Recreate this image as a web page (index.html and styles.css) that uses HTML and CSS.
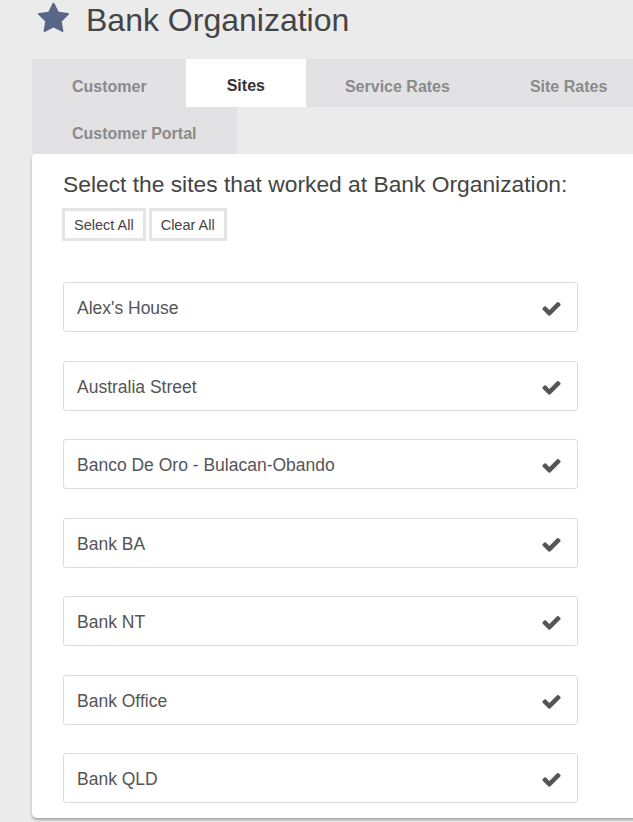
FILE: index.html
```html
<!DOCTYPE html>
<html>
<head>
<meta charset="utf-8">
<link rel="stylesheet" href="styles.css">
</head>
<body>
<div class="page">
  <header class="header">
    <svg class="star" viewBox="0 0 1664 1600" aria-hidden="true"><path d="M1664 583q0 22-26 48l-363 354 86 500q1 7 1 20 0 21-10.5 35.5t-30.5 14.5q-19 0-40-12l-449-236-449 236q-22 12-40 12-21 0-31.5-14.5t-10.5-35.5q0-6 2-20l86-500-364-354q-25-27-25-48 0-37 56-46l502-73 225-455q19-41 49-41t49 41l225 455 502 73q56 9 56 46z"/></svg>
    <h1 class="title">Bank Organization</h1>
  </header>
  <nav class="tabs">
    <a class="tab">Customer</a>
    <a class="tab active">Sites</a>
    <a class="tab">Service Rates</a>
    <a class="tab">Site Rates</a>
    <a class="tab">Customer Portal</a>
  </nav>
  <section class="panel">
    <h2 class="heading">Select the sites that worked at Bank Organization:</h2>
    <div class="actions">
      <button class="btn">Select All</button>
      <button class="btn">Clear All</button>
    </div>
    <ul class="sites">
      <li class="site"><span>Alex's House</span><svg class="check" viewBox="0 0 1792 1792"><path d="M1671 566q0 40-28 68l-724 724-136 136q-28 28-68 28t-68-28l-136-136-362-362q-28-28-28-68t28-68l136-136q28-28 68-28t68 28l294 295 656-657q28-28 68-28t68 28l136 136q28 28 28 68z"/></svg></li>
      <li class="site"><span>Australia Street</span><svg class="check" viewBox="0 0 1792 1792"><path d="M1671 566q0 40-28 68l-724 724-136 136q-28 28-68 28t-68-28l-136-136-362-362q-28-28-28-68t28-68l136-136q28-28 68-28t68 28l294 295 656-657q28-28 68-28t68 28l136 136q28 28 28 68z"/></svg></li>
      <li class="site"><span>Banco De Oro - Bulacan-Obando</span><svg class="check" viewBox="0 0 1792 1792"><path d="M1671 566q0 40-28 68l-724 724-136 136q-28 28-68 28t-68-28l-136-136-362-362q-28-28-28-68t28-68l136-136q28-28 68-28t68 28l294 295 656-657q28-28 68-28t68 28l136 136q28 28 28 68z"/></svg></li>
      <li class="site"><span>Bank BA</span><svg class="check" viewBox="0 0 1792 1792"><path d="M1671 566q0 40-28 68l-724 724-136 136q-28 28-68 28t-68-28l-136-136-362-362q-28-28-28-68t28-68l136-136q28-28 68-28t68 28l294 295 656-657q28-28 68-28t68 28l136 136q28 28 28 68z"/></svg></li>
      <li class="site"><span>Bank NT</span><svg class="check" viewBox="0 0 1792 1792"><path d="M1671 566q0 40-28 68l-724 724-136 136q-28 28-68 28t-68-28l-136-136-362-362q-28-28-28-68t28-68l136-136q28-28 68-28t68 28l294 295 656-657q28-28 68-28t68 28l136 136q28 28 28 68z"/></svg></li>
      <li class="site"><span>Bank Office</span><svg class="check" viewBox="0 0 1792 1792"><path d="M1671 566q0 40-28 68l-724 724-136 136q-28 28-68 28t-68-28l-136-136-362-362q-28-28-28-68t28-68l136-136q28-28 68-28t68 28l294 295 656-657q28-28 68-28t68 28l136 136q28 28 28 68z"/></svg></li>
      <li class="site"><span>Bank QLD</span><svg class="check" viewBox="0 0 1792 1792"><path d="M1671 566q0 40-28 68l-724 724-136 136q-28 28-68 28t-68-28l-136-136-362-362q-28-28-28-68t28-68l136-136q28-28 68-28t68 28l294 295 656-657q28-28 68-28t68 28l136 136q28 28 28 68z"/></svg></li>
    </ul>
  </section>
</div>
</body>
</html>
```
FILE: styles.css
```css
html, body {
  margin: 0;
  padding: 0;
  overflow: hidden;
  background: #ebebeb;
  font-family: "Liberation Sans", Arial, sans-serif;
}
.page {
  width: 633px;
  height: 822px;
  overflow: hidden;
}
.header {
  display: flex;
  align-items: center;
  height: 40px;
  padding-left: 38px;
}
.star {
  width: 31px;
  height: 30px;
  fill: #5a6688;
  margin-right: 17px;
  margin-top: -4px;
}
.title {
  margin: 0;
  font-size: 32px;
  font-weight: normal;
  color: #444;
  line-height: 38px;
}
.tabs {
  display: flex;
  flex-wrap: wrap;
  width: 640px;
  margin-top: 19px;
  margin-left: 32px;
}
.tab {
  display: block;
  padding: 0 39px;
  height: 48px;
  line-height: 56px;
  background: #e2e2e4;
  color: #8a8a8a;
  font-weight: bold;
  font-size: 16px;
  white-space: nowrap;
}
.tab:first-child {
  padding: 0 39px 0 40px;
}
.tab:nth-child(4) {
  padding: 0 39px 0 41px;
}
.tab:nth-child(5) {
  height: 47px;
  line-height: 54px;
  padding: 0 41px 0 40px;
}
.tab.active {
  background: #fff;
  color: #333;
  padding: 0 41px;
  line-height: 53px;
}
.panel {
  margin-left: 32px;
  width: 640px;
  height: 664px;
  background: #fff;
  border-radius: 4px 0 0 5px;
  box-shadow: 0 2px 3px rgba(0, 0, 0, 0.3);
  padding: 16px 0 0 31px;
  box-sizing: border-box;
}
.heading {
  margin: 0;
  font-size: 22.8px;
  font-weight: normal;
  color: #444;
  line-height: 28px;
}
.actions {
  display: flex;
  gap: 3px;
  margin-top: 10px;
  margin-left: -1px;
}
.btn {
  height: 33px;
  padding: 0 9px;
  border: 3px solid #e4e4e4;
  background: #fff;
  font-family: "Liberation Sans", Arial, sans-serif;
  font-size: 14.5px;
  color: #444;
}
.sites {
  list-style: none;
  margin: 41px 0 0;
  padding: 0;
  display: flex;
  flex-direction: column;
  gap: 28.5px;
}
.site {
  display: flex;
  align-items: center;
  justify-content: space-between;
  box-sizing: border-box;
  width: 515px;
  height: 50px;
  padding: 3px 15px 0 13px;
  border: 1px solid #dcdcdc;
  border-radius: 3px;
  font-size: 17.5px;
  color: #555;
}
.check {
  width: 21px;
  height: 21px;
  fill: #555;
}
```
